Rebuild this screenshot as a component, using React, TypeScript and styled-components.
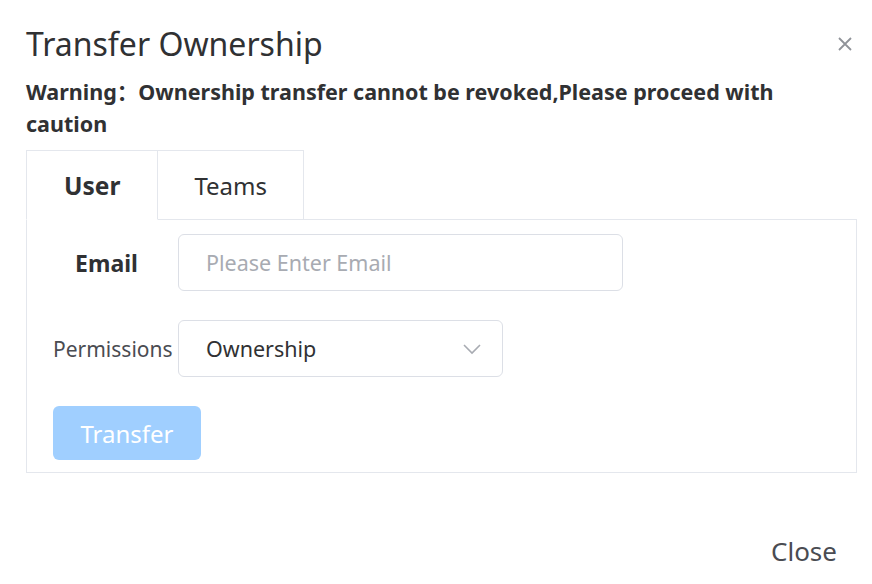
import styled, { createGlobalStyle } from 'styled-components'

const Global = createGlobalStyle`
  html, body {
    margin: 0;
    padding: 0;
    background: #fff;
  }
  body {
    font-family: 'Noto Sans', 'Noto Sans CJK SC', sans-serif;
    color: #303133;
  }
`

const Dialog = styled.div`
  width: 872px;
  height: 584px;
  box-sizing: border-box;
  padding: 22px 15px 0 26px;
  display: flex;
  flex-direction: column;
`

const Header = styled.div`
  display: flex;
  align-items: center;
  justify-content: space-between;
  height: 44px;
`

const Title = styled.h2`
  margin: 0;
  font-size: 32px;
  font-weight: 400;
  line-height: 44px;
  color: #303133;
`

const CloseIcon = styled.button`
  border: 0;
  background: none;
  padding: 0;
  width: 24px;
  height: 24px;
  display: flex;
  align-items: center;
  justify-content: center;
  color: #909399;
  cursor: pointer;
`

const Warning = styled.p`
  margin: 10px 0 0;
  width: 831px;
  font-size: 21.5px;
  font-weight: 700;
  line-height: 32px;
  color: #303133;
`

const Tabs = styled.div`
  margin-top: 10px;
  width: 831px;
`

const TabBar = styled.div`
  display: flex;
`

const Tab = styled.div<{ $active?: boolean }>`
  height: 70px;
  box-sizing: border-box;
  padding: 0 37px;
  display: flex;
  align-items: center;
  font-size: ${(p) => (p.$active ? '24.5px' : '24px')};
  font-weight: ${(p) => (p.$active ? 700 : 400)};
  color: #303133;
  border: 1px solid #e4e7ed;
  border-bottom-color: ${(p) => (p.$active ? '#fff' : '#e4e7ed')};
  margin-bottom: -1px;
  background: #fff;
  position: relative;
  z-index: 1;
  & + & {
    border-left: 0;
    padding: 0 36px;
  }
`

const Panel = styled.div`
  border: 1px solid #e4e7ed;
  padding: 14px 26px 12px;
  display: flex;
  flex-direction: column;
  gap: 29px;
`

const Row = styled.div`
  display: flex;
  align-items: center;
`

const Label = styled.label<{ $strong?: boolean }>`
  width: 125px;
  flex-shrink: 0;
  box-sizing: border-box;
  padding-right: ${(p) => (p.$strong ? '18px' : '0')};
  text-align: ${(p) => (p.$strong ? 'center' : 'left')};
  white-space: nowrap;
  font-size: ${(p) => (p.$strong ? '23px' : '21px')};
  font-weight: ${(p) => (p.$strong ? 700 : 400)};
  color: ${(p) => (p.$strong ? '#303133' : '#4a4c52')};
`

const Input = styled.input`
  width: 445px;
  height: 57px;
  box-sizing: border-box;
  border: 1px solid #dcdfe6;
  border-radius: 6px;
  padding: 0 27px;
  font-family: inherit;
  font-size: 21.5px;
  color: #303133;
  outline: none;
  &::placeholder {
    color: #a8abb2;
  }
`

const Select = styled.div`
  width: 325px;
  height: 57px;
  box-sizing: border-box;
  border: 1px solid #dcdfe6;
  border-radius: 6px;
  padding: 0 20px 0 27px;
  display: flex;
  align-items: center;
  justify-content: space-between;
  font-size: 21.5px;
  color: #303133;
`

const Button = styled.button`
  align-self: flex-start;
  width: 148px;
  height: 54px;
  border: 0;
  border-radius: 6px;
  background: #a0cfff;
  color: #fff;
  font-family: inherit;
  font-size: 24px;
  cursor: not-allowed;
`

const Footer = styled.div`
  margin-top: 60px;
  display: flex;
  justify-content: flex-end;
  padding-right: 20px;
`

const TextButton = styled.button`
  border: 0;
  background: none;
  padding: 0;
  font-family: inherit;
  font-size: 26px;
  line-height: 36px;
  color: #4a4c52;
  cursor: pointer;
`

export default function App() {
  return (
    <>
      <Global />
      <Dialog>
        <Header>
          <Title>Transfer Ownership</Title>
          <CloseIcon aria-label="close">
            <svg width="16" height="16" viewBox="0 0 16 16" fill="none" stroke="currentColor" strokeWidth="1.8">
              <path d="M2 2l12 12M14 2L2 14" />
            </svg>
          </CloseIcon>
        </Header>
        <Warning>Warning：Ownership transfer cannot be revoked,Please proceed with caution</Warning>
        <Tabs>
          <TabBar>
            <Tab $active>User</Tab>
            <Tab>Teams</Tab>
          </TabBar>
          <Panel>
            <Row>
              <Label $strong>Email</Label>
              <Input placeholder="Please Enter Email" />
            </Row>
            <Row>
              <Label>Permissions</Label>
              <Select>
                <span>Ownership</span>
                <svg width="20" height="12" viewBox="0 0 20 12" fill="none" stroke="#a8abb2" strokeWidth="1.6">
                  <path d="M2 2l8 8 8-8" />
                </svg>
              </Select>
            </Row>
            <Button disabled>Transfer</Button>
          </Panel>
        </Tabs>
        <Footer>
          <TextButton>Close</TextButton>
        </Footer>
      </Dialog>
    </>
  )
}
